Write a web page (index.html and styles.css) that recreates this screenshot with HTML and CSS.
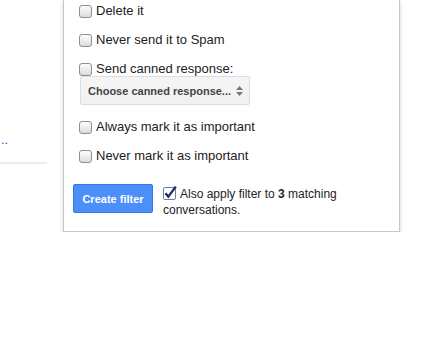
FILE: index.html
```html
<!DOCTYPE html>
<html>
<head>
<meta charset="utf-8">
<link rel="stylesheet" href="styles.css">
</head>
<body>
<div class="page">
  <div class="side">
    <span class="dots">..</span>
    <div class="rule"></div>
  </div>
  <div class="panel">
    <label class="row"><span class="cb"></span>Delete it</label>
    <label class="row"><span class="cb"></span>Never send it to Spam</label>
    <label class="row"><span class="cb"></span>Send canned response:</label>
    <div class="select">
      <span>Choose canned response...</span>
      <svg class="arrows" width="7" height="10" viewBox="0 0 7 10"><path d="M0 4 L3.5 0 L7 4 Z M0 6 L3.5 10 L7 6 Z" fill="#777"/></svg>
    </div>
    <label class="row gap"><span class="cb"></span>Always mark it as important</label>
    <label class="row"><span class="cb"></span>Never mark it as important</label>
    <div class="footer">
      <button class="btn">Create filter</button>
      <div class="apply"><svg class="cbc" width="14" height="14" viewBox="0 0 14 14"><rect x="0.5" y="1.5" width="12" height="12" rx="1.5" fill="#fff" stroke="#6a7fa6"/><path d="M2.5 7.2 L5.3 10.6 L12.8 0.6" fill="none" stroke="#1d2f5e" stroke-width="2.3"/></svg>Also apply filter to <b>3</b> matching conversations.</div>
    </div>
  </div>
</div>
</body>
</html>
```
FILE: styles.css
```css
html, body {
  margin: 0;
  padding: 0;
  background: #fff;
}
body {
  font-family: Arial, "Liberation Sans", sans-serif;
  font-size: 13px;
  color: #222;
}
.page {
  display: flex;
  align-items: flex-start;
}
.side {
  width: 63px;
  padding-top: 132px;
}
.dots {
  display: block;
  color: #15c;
  line-height: 16px;
  margin-left: 1px;
}
.rule {
  width: 47px;
  height: 2px;
  background: #ececec;
  margin-top: 14px;
}
.panel {
  width: 335px;
  border: 1px solid #c8c8c8;
  border-top: none;
  box-shadow: 0 2px 4px rgba(0,0,0,0.18);
  padding: 3px 0 13px 0;
  background: #fff;
}
.row {
  display: flex;
  align-items: center;
  height: 16px;
  margin: 0 0 13px 15px;
  line-height: 16px;
  white-space: nowrap;
}
.row.gap {
  margin-top: 14px;
}
.cb {
  box-sizing: border-box;
  width: 13px;
  height: 13px;
  border: 1px solid #8e8e8e;
  border-radius: 3px;
  background: linear-gradient(#fdfdfd, #dcdcdc);
  margin-right: 4px;
  flex: none;
}
.select {
  box-sizing: border-box;
  display: flex;
  align-items: center;
  justify-content: space-between;
  width: 170px;
  height: 29px;
  margin: -14px 0 0 16px;
  padding: 0 6px 0 7px;
  border: 1px solid #dcdcdc;
  border-radius: 2px;
  background: linear-gradient(#f5f5f5, #f1f1f1);
  color: #444;
  font-weight: bold;
  font-size: 11px;
}
.footer {
  display: flex;
  align-items: flex-start;
  margin: 20px 0 0 9px;
}
.btn {
  box-sizing: border-box;
  width: 80px;
  height: 29px;
  border: 1px solid #3079ed;
  border-radius: 2px;
  background: #4d8ff9;
  color: #fff;
  font-family: Arial, "Liberation Sans", sans-serif;
  font-weight: bold;
  font-size: 11px;
  padding: 0;
  margin-right: 10px;
}
.apply {
  width: 220px;
  font-size: 12px;
  line-height: 16px;
  margin-top: 2px;
}
.cbc {
  vertical-align: -2px;
  margin-right: 3px;
}
.apply b {
  font-weight: bold;
}
```
